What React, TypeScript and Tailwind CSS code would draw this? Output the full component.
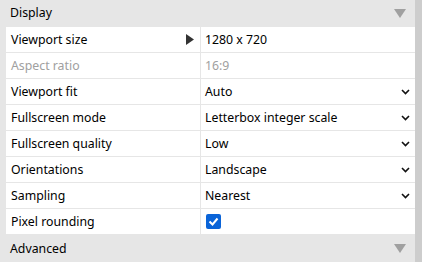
import React from 'react';

type Row = {
  label: string;
  value: string;
  kind: 'arrow' | 'select' | 'text' | 'check';
  muted?: boolean;
};

const rows: Row[] = [
  { label: 'Viewport size', value: '1280 x 720', kind: 'arrow' },
  { label: 'Aspect ratio', value: '16:9', kind: 'text', muted: true },
  { label: 'Viewport fit', value: 'Auto', kind: 'select' },
  { label: 'Fullscreen mode', value: 'Letterbox integer scale', kind: 'select' },
  { label: 'Fullscreen quality', value: 'Low', kind: 'select' },
  { label: 'Orientations', value: 'Landscape', kind: 'select' },
  { label: 'Sampling', value: 'Nearest', kind: 'select' },
  { label: 'Pixel rounding', value: '', kind: 'check' },
];

function SectionHeader({ title, className }: { title: string; className: string }) {
  return (
    <div className={`flex items-center justify-between pl-[10px] pr-[9px] ${className}`}>
      <span className="pt-px">{title}</span>
      <svg width="12" height="9" viewBox="0 0 12 9">
        <path d="M0 0h12L6 9z" fill="#a0a0a0" />
      </svg>
    </div>
  );
}

function Chevron() {
  return (
    <svg width="9" height="6" viewBox="0 0 9 6" className="mr-[5px]">
      <path d="M1 1l3.5 3.5L8 1" fill="none" stroke="#111" strokeWidth="1.6" />
    </svg>
  );
}

export default function App() {
  return (
    <div
      className="flex h-[262px] w-[422px] overflow-hidden bg-white text-[12.3px] text-black"
      style={{ fontFamily: '"Segoe UI", "Noto Sans", sans-serif' }}
    >
      <div className="flex w-[415px] flex-col bg-[#e6e6e6]">
        <SectionHeader title="Display" className="h-[26px]" />

        <div className="grid grid-cols-[194px_1fr] gap-px py-px pl-[6px]">
          {rows.map((r) => (
            <React.Fragment key={r.label}>
              <div
                className={`flex h-[25px] items-center justify-between bg-white pl-[5px] pr-[6px] ${
                  r.muted ? 'text-[#a0a0a0]' : ''
                }`}
              >
                <span className="pt-[2px]">{r.label}</span>
                {r.kind === 'arrow' && (
                  <svg width="8" height="11" viewBox="0 0 8 11">
                    <path d="M0 0l8 5.5L0 11z" fill="#333" />
                  </svg>
                )}
              </div>
              <div
                className={`flex h-[25px] items-center justify-between bg-white pl-[4px] ${
                  r.muted ? 'text-[#a0a0a0]' : ''
                }`}
              >
                {r.kind === 'check' ? (
                  <span className="ml-px flex h-[15px] w-[15px] items-center justify-center rounded-[2px] bg-[#0a64d8]">
                    <svg width="11" height="9" viewBox="0 0 11 9">
                      <path d="M1.5 4.5l3 3L9.5 1.5" fill="none" stroke="#fff" strokeWidth="2" />
                    </svg>
                  </span>
                ) : (
                  <span className="pt-[2px]">{r.value}</span>
                )}
                {r.kind === 'select' && <Chevron />}
              </div>
            </React.Fragment>
          ))}
        </div>

        <SectionHeader title="Advanced" className="flex-1" />
      </div>
      <div className="w-[7px] bg-[#cdcdcd]" />
    </div>
  );
}
